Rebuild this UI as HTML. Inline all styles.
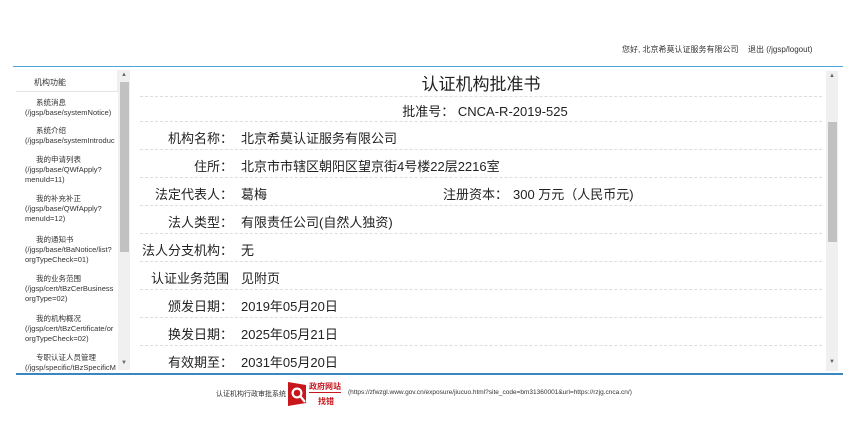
<!DOCTYPE html>
<html><head><meta charset="utf-8"><style>
*{margin:0;padding:0;box-sizing:border-box}
body{width:854px;height:430px;background:#fff;font-family:"Liberation Sans","Noto Sans CJK SC",sans-serif;position:relative;overflow:hidden;color:#222}
.top{position:absolute;top:44px;font-size:8px;color:#333}
.bl{position:absolute;height:1px;background:#4aa6e0}
.side{position:absolute;left:16px;top:70px;width:114px;height:302px;overflow:hidden}
.side .hd{position:absolute;left:0;top:0;width:102px;height:22px;border-bottom:1px solid #e4e4e4;border-right:1px solid #eee;font-size:8px;padding:7px 0 0 18px;color:#333}
.it{position:absolute;left:9px;font-size:7.5px;line-height:10px;color:#333;white-space:nowrap;width:93px;overflow:hidden}
.it .t{padding-left:11px}
.sb{position:absolute;background:#f0f0f0}
.th{position:absolute;background:#c1c1c1}
.row{position:absolute;left:140px;width:682px;border-bottom:1px dashed #ddd;height:28px}
.lab{position:absolute;left:0;width:93px;text-align:right;font-size:13px;top:6px;white-space:nowrap;display:block}
.val{position:absolute;left:101px;font-size:13px;top:6px;white-space:nowrap;display:block}
.arr{position:absolute;font-size:6px;color:#666}
</style></head><body>
<div class="top" style="left:622px">您好, 北京希莫认证服务有限公司</div>
<div class="top" style="left:748px">退出 (/jgsp/logout)</div>
<div class="bl" style="left:13px;top:66px;width:830px"></div>
<div class="side">
<div class="hd">机构功能</div>
<div class="it" style="top:28px"><div class="t">系统消息</div>(/jgsp/base/systemNotice)</div>
<div class="it" style="top:56px"><div class="t">系统介绍</div>(/jgsp/base/systemIntroduc</div>
<div class="it" style="top:85px"><div class="t">我的申请列表</div>(/jgsp/base/QWfApply?<br>menuId=11)</div>
<div class="it" style="top:124px"><div class="t">我的补充补正</div>(/jgsp/base/QWfApply?<br>menuId=12)</div>
<div class="it" style="top:165px"><div class="t">我的通知书</div>(/jgsp/base/tBaNotice/list?<br>orgTypeCheck=01)</div>
<div class="it" style="top:204px"><div class="t">我的业务范围</div>(/jgsp/cert/tBzCerBusiness<br>orgType=02)</div>
<div class="it" style="top:244px"><div class="t">我的机构概况</div>(/jgsp/cert/tBzCertificate/or<br>orgTypeCheck=02)</div>
<div class="it" style="top:283px"><div class="t">专职认证人员管理</div>(/jgsp/specific/tBzSpecificM</div>
<div class="sb" style="left:102px;top:0;width:12px;height:300px"></div>
<div class="th" style="left:104px;top:12px;width:9px;height:170px"></div>
<div class="arr" style="left:105px;top:2px">▲</div>
<div class="arr" style="left:105px;top:290px">▼</div>
</div>
<div style="position:absolute;left:140px;top:74px;width:682px;text-align:center;font-size:17px;border-bottom:1px dashed #ddd;height:23px;line-height:22px">认证机构批准书</div>
<div style="position:absolute;left:140px;top:97px;width:682px;text-align:center;font-size:13px;border-bottom:1px dashed #ddd;height:25px;padding-top:4px;padding-left:8px">批准号：&nbsp;CNCA-R-2019-525</div>
<div class="row" style="top:122px"><div class="lab">机构名称：</div><div class="val">北京希莫认证服务有限公司</div></div>
<div class="row" style="top:150px"><div class="lab">住所：</div><div class="val">北京市市辖区朝阳区望京街4号楼22层2216室</div></div>
<div class="row" style="top:178px"><div class="lab">法定代表人：</div><div class="val">葛梅</div><div class="val" style="left:303px">注册资本：</div><div class="val" style="left:373px">300 万元（人民币元)</div></div>
<div class="row" style="top:206px"><div class="lab">法人类型：</div><div class="val">有限责任公司(自然人独资)</div></div>
<div class="row" style="top:234px"><div class="lab">法人分支机构：</div><div class="val">无</div></div>
<div class="row" style="top:262px"><div class="lab" style="width:89px">认证业务范围</div><div class="val">见附页</div></div>
<div class="row" style="top:290px"><div class="lab">颁发日期：</div><div class="val">2019年05月20日</div></div>
<div class="row" style="top:318px"><div class="lab">换发日期：</div><div class="val">2025年05月21日</div></div>
<div class="row" style="top:346px;border:none"><div class="lab">有效期至：</div><div class="val">2031年05月20日</div></div>
<div class="sb" style="left:826px;top:71px;width:12px;height:300px"></div>
<div class="th" style="left:828px;top:122px;width:9px;height:120px"></div>
<div class="arr" style="left:829px;top:73px">▲</div>
<div class="arr" style="left:829px;top:359px">▼</div>
<div class="bl" style="left:16px;top:373px;width:827px;height:2px;background:#3a86c0"></div>
<div style="position:absolute;left:216px;top:389px;font-size:7px;color:#333">认证机构行政审批系统</div>
<svg style="position:absolute;left:288px;top:381px" width="18" height="26" viewBox="0 0 18 26"><path d="M0 1 L18 4 L18 22 L0 25 Z" fill="#c8161d"/><circle cx="9" cy="12" r="5.5" fill="#fff"/><circle cx="9" cy="12" r="3.3" fill="#c8161d"/><path d="M12.5 15.5 L17 21" stroke="#fff" stroke-width="2.2"/></svg>
<div style="position:absolute;left:309px;top:382px;font-size:8px;color:#c8161d;font-weight:bold;border-bottom:1px solid #c8161d;line-height:10px">政府网站</div>
<div style="position:absolute;left:318px;top:396px;font-size:8px;color:#c8161d;font-weight:bold">找错</div>
<div style="position:absolute;left:348px;top:389px;font-size:6.5px;color:#333;white-space:nowrap">(https://zfwzgl.www.gov.cn/exposure/jiucuo.html?site_code=bm31360001&amp;url=https://rzjg.cnca.cn/)</div>
</body></html>
